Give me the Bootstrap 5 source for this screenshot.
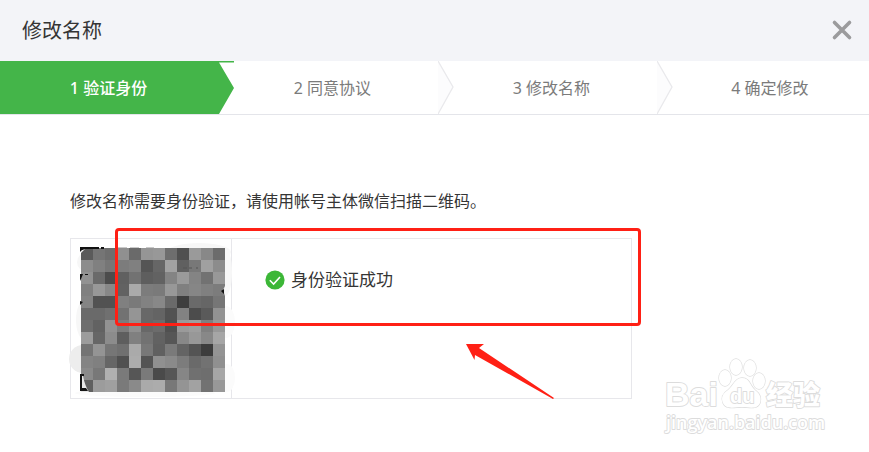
<!DOCTYPE html>
<html lang="zh-CN">
<head>
<meta charset="utf-8">
<meta name="viewport" content="width=device-width, initial-scale=1">
<title>修改名称</title>
<link href="https://cdn.jsdelivr.net/npm/bootstrap@5.3.0/dist/css/bootstrap.min.css" rel="stylesheet">
<style>
  body { font-family: "Noto Sans", "Noto Sans CJK SC", sans-serif; color: #353535; background: #fff; }
  .dialog-head { background: #f3f4f8; padding: 14px 16px 16px 22px; }
  .dialog-title { font-family: "Noto Sans CJK SC", sans-serif; font-size: 20px; line-height: 31px; font-weight: 400; }
  .close-btn { line-height: 0; }
  .steps { border-bottom: 1px solid #e4e5ea; font-size: 16px; line-height: 52px; color: #7b7b7b; }
  .step { flex: 0 0 25.2%; text-align: center; padding: 1px 2px 0 0; }
  .step + .step { padding: 1px 0 0 8px; }
  .step:last-child { flex: 1 1 0; padding-left: 14px; }
  .step-on { background: #44b549; color: #fff; font-weight: 500; }
  .step-edge { position: absolute; left: 100%; top: 0; width: 16px; height: 100%; z-index: 1; }
  .step-on .step-edge { margin-left: -1px; }
  .verify { padding: 71px 70px 50px; font-size: 17px; }
  .verify p { font-size: 16px; line-height: 30px; margin-bottom: 22px; white-space: nowrap; }
  .verify-box { max-width: 562px; border: 1px solid #e7e7eb; }
  .qr-cell { padding: 9px 6px 6px 10px; border-right: 1px solid #e7e7eb; }
  .qr-cell svg { display: block; overflow: visible; }
  .result { padding: 26px 33px; line-height: 30px; gap: 6px; }
  .highlight { position: absolute; left: 44px; right: -10px; top: -11px; height: 98px; border: 3px solid #ff2015; border-radius: 4px; }
  .pointer { position: absolute; left: 394px; top: 104px; }
  .watermark { position: absolute; right: 40px; bottom: 12px; }
</style>
</head>
<body>
<main class="position-relative">
  <header class="dialog-head d-flex align-items-center justify-content-between">
    <h1 class="dialog-title m-0">修改名称</h1>
    <button type="button" class="close-btn btn border-0 p-0" aria-label="关闭">
      <svg width="22" height="22" viewBox="0 0 22 22" fill="none" stroke="#9b9b9d" stroke-width="3.6" stroke-linecap="round"><path d="M3.500 3.500 18.500 18.500M18.500 3.500 3.500 18.500"/></svg>
    </button>
  </header>

  <ol class="steps list-unstyled d-flex m-0">
    <li class="step step-on position-relative" aria-current="step">1 验证身份
      <svg class="step-edge" viewBox="0 0 16 53" preserveAspectRatio="none"><path d="M0 0H16V1.500H1L16 27 1 53H0Z" fill="#44b549"/></svg>
    </li>
    <li class="step position-relative">2 同意协议
      <svg class="step-edge" viewBox="0 0 16 53" preserveAspectRatio="none"><path d="M0 0 15 26 0 53" fill="#fcfcfd" stroke="#e9e9ec" stroke-width="1.3"/></svg>
    </li>
    <li class="step position-relative">3 修改名称
      <svg class="step-edge" viewBox="0 0 16 53" preserveAspectRatio="none"><path d="M0 0 15 26 0 53" fill="#fcfcfd" stroke="#e9e9ec" stroke-width="1.3"/></svg>
    </li>
    <li class="step">4 确定修改</li>
  </ol>

  <section class="verify">
    <p>修改名称需要身份验证，请使用帐号主体微信扫描二维码。</p>
    <div class="verify-box d-flex position-relative">
      <div class="qr-cell">
        <svg id="qr" width="144" height="144" viewBox="0 0 144 144" role="img" aria-label="二维码">
          <g fill="#f7f7f7"><circle cx="6" cy="14" r="10"/><ellipse cx="118" cy="4" rx="32" ry="9"/><ellipse cx="144" cy="24" rx="7" ry="24"/><ellipse cx="4" cy="72" rx="9" ry="20"/></g>
          <g fill="#fbfbfb"><ellipse cx="146" cy="130" rx="8" ry="14"/><ellipse cx="145" cy="74" rx="9" ry="16"/><ellipse cx="64" cy="145" rx="70" ry="4"/></g>
          <circle cx="2" cy="111" r="14" fill="#ededed"/>
          <path d="M37-1h9v2h-9zM49-1h9v2h-9zM65-1h8v2h-8z" fill="#c9c9c9"/>
          <g id="mosaic" shape-rendering="crispEdges"></g>
          <path d="M0 0V5L4 1V0ZM144 38l-2 4 2 6Z" fill="#eee"/>
          <path d="M-1-1H18V1H4Q0 2-1 4ZM20-1h3v2h-3zM-1 26H2L0 31-1 33ZM4 26h3v1H4zM-1 53l3 1-3 3ZM140 43l3-2v5Z" fill="#111"/>
          <path d="M0 128H2Q4 138 8 144H0Z" fill="#e8e8e8"/>
          <path d="M-1 126H3V128H1V140H5L7 143H-1Z" fill="#161616"/>
          <path d="M102 20h4M108 20h3M115 20h2" stroke="#555" fill="none"/>
        </svg>
      </div>
      <div class="result d-flex align-items-center align-self-start">
        <svg width="20" height="20" viewBox="0 0 20 20" aria-hidden="true"><circle cx="10" cy="10" r="9.6" fill="#3cb737"/><path d="M4.800 10.200 8.600 14 15 7" fill="none" stroke="#fff" stroke-width="1.6"/></svg>
        <span>身份验证成功</span>
      </div>
      <div class="highlight"></div>
      <svg class="pointer" width="92" height="58" viewBox="0 0 92 58" aria-hidden="true"><path d="M1 1H19L14 5 89 55 88 56 10 12 9.500 17Z" fill="#ff2015"/></svg>
    </div>
  </section>

  <svg class="watermark" width="166" height="82" viewBox="0 0 166 82" stroke="#dcdcdc" fill="#fff" stroke-width="1.8" stroke-linejoin="round" paint-order="stroke">
    <text x="2" y="51" font-family="Liberation Sans" font-weight="700" font-size="34">Bai</text>
    <text x="103" y="50" font-family="Noto Sans CJK SC" font-weight="900" font-size="27">经验</text>
    <g stroke-width="1.3">
      <ellipse cx="62" cy="23" rx="6" ry="8"/><ellipse cx="73" cy="12" rx="6" ry="8"/><ellipse cx="87" cy="13" rx="6" ry="8"/><ellipse cx="96" cy="26" rx="6" ry="8"/>
      <path d="M79 23C72 23 70 31 65 35C59 39 58 43 60 48C63 55 72 52 79 52C86 52 94 55 97 48C99 42 96 38 92 35C87 31 87 23 79 23Z"/>
    </g>
    <text x="67" y="48" font-family="Liberation Sans" font-weight="700" font-size="20">du</text>
    <text x="3" y="74" font-family="Open Sans" font-weight="600" font-size="18">jingyan.baidu.com</text>
  </svg>
</main>
<script>
  // Grey levels of the blurred code, one row of twelve cells per line
  const rows = [
    '5a 75 6e 90 6a 95 98 6e 50 9a 88 6c',
    '8c 80 76 7c 80 55 66 a2 60 78 a0 8c',
    '92 6a 4c 60 72 5e 62 84 9a 84 72 98',
    '80 98 88 62 aa 7c 7a 98 80 86 80 7c',
    '84 52 52 80 7a 82 88 6a 3e 6a 66 76',
    '6a 6a 70 72 95 68 64 52 82 4c 5a 92',
    '6e 62 92 7c 90 68 6c 50 9a 9e 80 98',
    '9c 66 8c 5e 80 72 62 56 88 98 88 a6',
    '74 94 76 70 aa 78 60 7a 64 54 3c 94',
    '84 80 66 50 ac 54 90 8a 7c 6a 72 90',
    '8a 78 b0 7a 56 7a 4a 56 86 70 6e a6',
    '60 9c a0 7a 8a aa ac 78 94 a2 72 98'
  ];
  document.getElementById('mosaic').innerHTML = rows.map((row, y) =>
    row.split(' ').map((g, x) => `<rect x="${x * 12}" y="${y * 12}" width="12" height="12" fill="#${g + g + g}"/>`).join('')
  ).join('');
</script>
<script src="https://cdn.jsdelivr.net/npm/bootstrap@5.3.0/dist/js/bootstrap.bundle.min.js"></script>
</body>
</html>
